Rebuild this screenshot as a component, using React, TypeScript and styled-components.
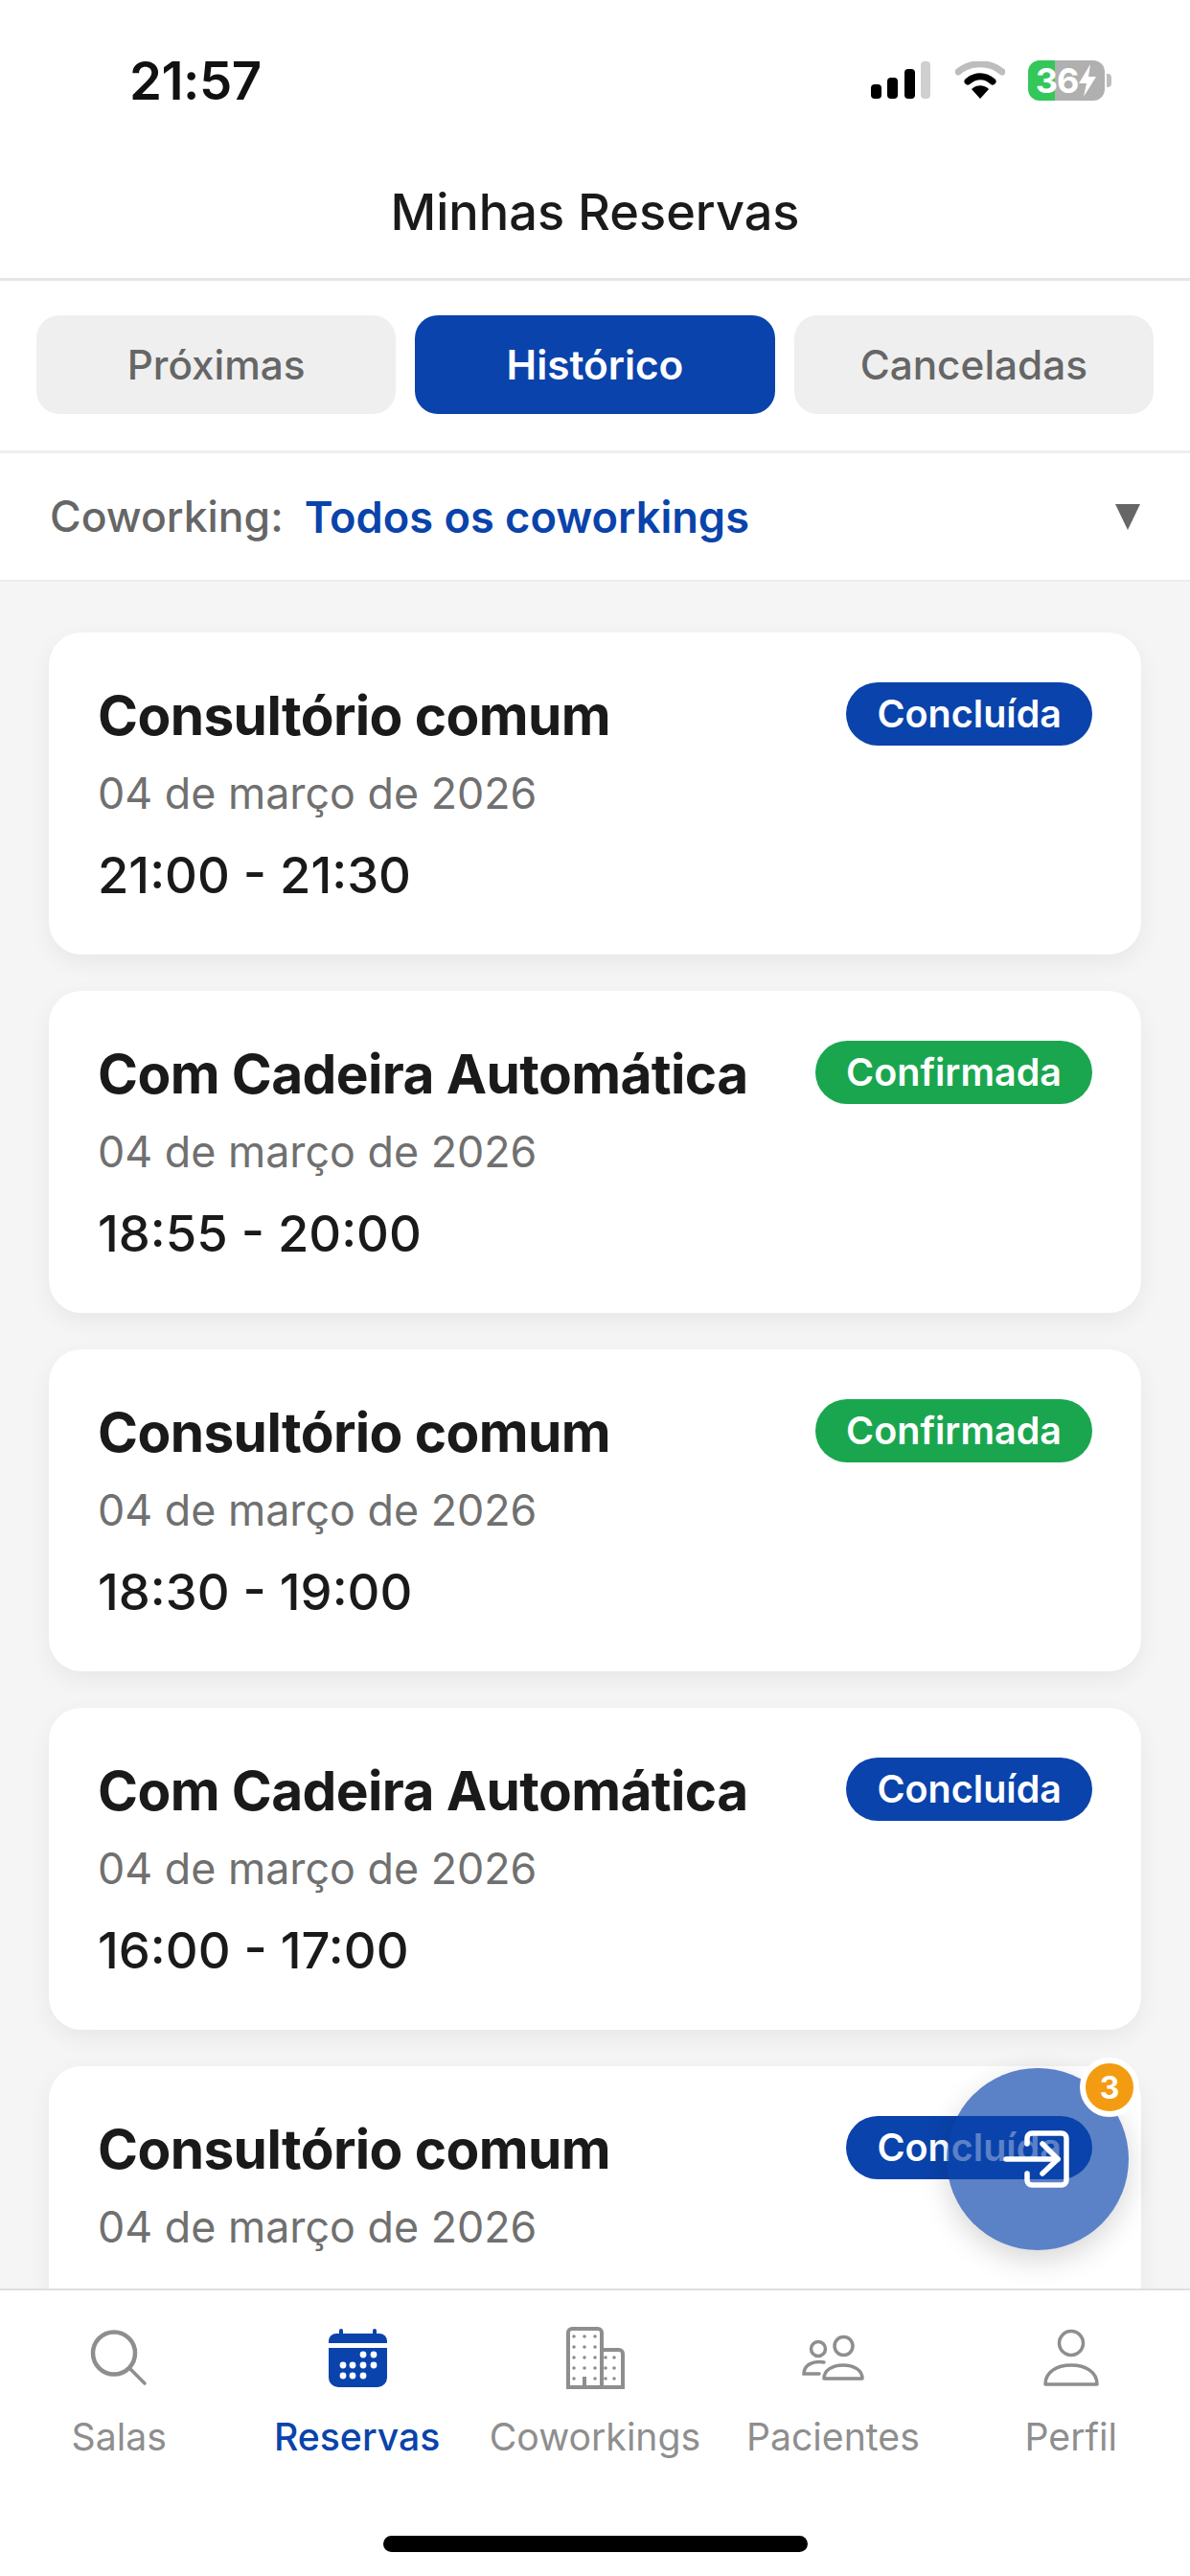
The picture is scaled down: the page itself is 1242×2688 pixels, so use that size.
import styled, { createGlobalStyle } from "styled-components";

interface IBooking {
  room: string;
  date: string;
  time?: string;
  status: "Concluída" | "Confirmada";
}

// the last card runs under the tab bar, its time line is never on screen
const bookings: IBooking[] = [
  { room: "Consultório comum", date: "04 de março de 2026", time: "21:00 - 21:30", status: "Concluída" },
  { room: "Com Cadeira Automática", date: "04 de março de 2026", time: "18:55 - 20:00", status: "Confirmada" },
  { room: "Consultório comum", date: "04 de março de 2026", time: "18:30 - 19:00", status: "Confirmada" },
  { room: "Com Cadeira Automática", date: "04 de março de 2026", time: "16:00 - 17:00", status: "Concluída" },
  { room: "Consultório comum", date: "04 de março de 2026", status: "Concluída" },
];

const BLUE = "#0a43ab";
const GRAY = "#8e8e8e";

const GlobalStyle = createGlobalStyle`
  html, body {
    margin: 0;
    padding: 0;
    background: #fff;
  }
  * {
    box-sizing: border-box;
  }
`;

const Screen = styled.div`
  position: relative;
  width: 1242px;
  height: 2688px;
  display: flex;
  flex-direction: column;
  overflow: hidden;
  background: #fff;
  font-family: Inter, "Liberation Sans", sans-serif;
  color: #1a1a1a;
`;

const StatusBar = styled.div`
  height: 168px;
  flex: none;
  display: flex;
  align-items: center;
  justify-content: space-between;
  padding: 0 89px 0 135px;
`;

const Clock = styled.span`
  font-size: 54.5px;
  font-weight: 600;
  letter-spacing: -0.5px;
  color: #111;
`;

const StatusIcons = styled.div`
  display: flex;
  align-items: center;
  gap: 24px;
`;

const Battery = styled.div`
  position: relative;
  width: 80px;
  height: 42px;
  border-radius: 12px;
  display: flex;
  align-items: center;
  justify-content: center;
  background: linear-gradient(90deg, #34c759 0 35%, #b0b0b0 35% 100%);
  color: #fff;
  font-size: 36px;
  font-weight: 700;
  letter-spacing: -1px;

  &::after {
    content: "";
    position: absolute;
    right: -7px;
    top: 14px;
    width: 5px;
    height: 14px;
    border-radius: 0 4px 4px 0;
    background: #bdbdbd;
  }
`;

const PageTitle = styled.h1`
  height: 125px;
  flex: none;
  margin: 0;
  padding-bottom: 16px;
  display: flex;
  align-items: center;
  justify-content: center;
  border-bottom: 3px solid #e6e6e6;
  font-size: 52.3px;
  font-weight: 500;
  color: #1a1a1a;
`;

const Tabs = styled.div`
  flex: none;
  display: grid;
  grid-template-columns: repeat(3, 1fr);
  gap: 20px;
  padding: 36px 38px 38px;
  border-bottom: 3px solid #eeeeee;
`;

const Tab = styled.div<{ $active?: boolean }>`
  height: 103px;
  display: flex;
  align-items: center;
  justify-content: center;
  border-radius: 24px;
  background: ${(props) => (props.$active ? BLUE : "#efefef")};
  color: ${(props) => (props.$active ? "#fff" : "#666")};
  font-size: 42.3px;
  font-weight: ${(props) => (props.$active ? 600 : 500)};
`;

const Filter = styled.div`
  height: 134px;
  flex: none;
  display: flex;
  align-items: center;
  padding: 0 52px;
  border-bottom: 2px solid #ececec;
`;

const FilterLabel = styled.span`
  color: #666;
  font-size: 44.5px;
  font-weight: 500;
  margin-right: 22px;
`;

const FilterValue = styled.span`
  flex: 1;
  color: ${BLUE};
  font-size: 45.2px;
  font-weight: 600;
`;

const Caret = styled.span`
  width: 0;
  height: 0;
  border-left: 13px solid transparent;
  border-right: 13px solid transparent;
  border-top: 27px solid #666;
`;

const List = styled.main`
  flex: 1;
  min-height: 0;
  overflow: hidden;
  display: flex;
  flex-direction: column;
  gap: 38px;
  padding: 53px 51px 0;
  background: #f5f5f5;
`;

const Card = styled.article`
  flex: none;
  height: 336px;
  padding: 52px 51px;
  border-radius: 34px;
  background: #fff;
  box-shadow: 0 8px 24px rgba(0, 0, 0, 0.06);
`;

const CardHead = styled.div`
  display: flex;
  align-items: flex-start;
  justify-content: space-between;
`;

const RoomName = styled.h2`
  margin: 0;
  font-size: 56.8px;
  line-height: 70px;
  font-weight: 700;
  letter-spacing: -0.6px;
  color: #1a1a1a;
`;

const StatusPill = styled.span<{ $status: IBooking["status"] }>`
  height: 66px;
  padding: 0 32px;
  display: flex;
  align-items: center;
  border-radius: 33px;
  background: ${(props) => (props.$status === "Confirmada" ? "#1aa64f" : BLUE)};
  color: #fff;
  font-size: 39.5px;
  font-weight: 600;
`;

const DateText = styled.div`
  margin-top: 18px;
  font-size: 44.8px;
  line-height: 56px;
  color: #707070;
`;

const TimeText = styled.div`
  margin-top: 25px;
  font-size: 52.5px;
  line-height: 64px;
  font-weight: 500;
  color: #1a1a1a;
`;

const BottomNav = styled.nav`
  flex: none;
  height: 300px;
  display: flex;
  flex-direction: column;
  border-top: 2px solid #dedede;
  background: #fff;
`;

const NavItems = styled.div`
  display: grid;
  grid-template-columns: repeat(5, 1fr);
  padding-top: 35px;
`;

const NavItem = styled.div<{ $active?: boolean }>`
  display: flex;
  flex-direction: column;
  align-items: center;
  gap: 25px;
  color: ${(props) => (props.$active ? BLUE : GRAY)};
  font-size: 39.2px;
  line-height: 46px;
  font-weight: ${(props) => (props.$active ? 500 : 400)};
  white-space: nowrap;
`;

const HomeIndicator = styled.div`
  width: 443px;
  height: 17px;
  margin: 80px auto 0;
  border-radius: 9px;
  background: #000;
`;

const Fab = styled.button`
  position: absolute;
  right: 64px;
  bottom: 340px;
  width: 190px;
  height: 190px;
  padding: 0;
  border: 0;
  border-radius: 50%;
  display: flex;
  align-items: center;
  justify-content: center;
  background: rgba(10, 67, 171, 0.67);
  box-shadow: 0 10px 30px rgba(0, 0, 0, 0.16);
`;

const FabBadge = styled.span`
  position: absolute;
  top: -11px;
  right: -11px;
  width: 62px;
  height: 62px;
  border-radius: 50%;
  border: 6px solid #fff;
  display: flex;
  align-items: center;
  justify-content: center;
  background: #f39c12;
  color: #fff;
  font-family: Inter, "Liberation Sans", sans-serif;
  font-size: 32px;
  font-weight: 700;
`;

const SignalIcon = () => (
  <svg width="64" height="40" viewBox="0 0 64 40">
    <rect x="0" y="24" width="11" height="15" rx="4" fill="#000" />
    <rect x="17" y="17" width="11" height="22" rx="4" fill="#000" />
    <rect x="35" y="8" width="11" height="31" rx="4" fill="#000" />
    <rect x="52" y="0" width="10" height="39" rx="4" fill="#cfcfcf" />
  </svg>
);

const WifiIcon = () => (
  <svg width="52" height="40" viewBox="0 0 52 40" fill="none">
    <path d="M3 11 C16 0 36 0 49 11" stroke="#bdbdbd" strokeWidth="7" strokeLinecap="round" />
    <path d="M13 21 C21 14 31 14 39 21" stroke="#000" strokeWidth="7" strokeLinecap="round" />
    <path d="M17 29 C22 24 30 24 35 29 L26 39 Z" fill="#000" />
  </svg>
);

const BoltIcon = () => (
  <svg width="20" height="36" viewBox="0 0 20 36">
    <path d="M13 1 L1 21 H9 L6 35 L19 14 H11 Z" fill="#fff" />
  </svg>
);

const SearchIcon = () => (
  <svg width="70" height="70" viewBox="0 0 70 70" fill="none" stroke={GRAY} strokeWidth="4.5" strokeLinecap="round">
    <circle cx="30" cy="30.5" r="22" />
    <path d="M47 47 L62 62" strokeWidth="3.5" />
  </svg>
);

const calendarDots = [
  [41, 32], [52, 32],
  [20, 43], [30, 43], [41, 43], [52, 43],
  [20, 54], [30, 54], [41, 54],
];

const CalendarIcon = () => (
  <svg width="70" height="70" viewBox="0 0 70 70">
    <rect x="16" y="5" width="4" height="8" rx="2" fill={BLUE} />
    <rect x="51" y="5" width="4" height="8" rx="2" fill={BLUE} />
    <path d="M5 20 V18 a8 8 0 0 1 8 -8 H58 a8 8 0 0 1 8 8 V20 Z" fill={BLUE} />
    <path d="M5 25 H66 V56 a10 10 0 0 1 -10 10 H15 a10 10 0 0 1 -10 -10 Z" fill={BLUE} />
    {calendarDots.map(([cx, cy]) => (
      <circle key={`${cx}-${cy}`} cx={cx} cy={cy} r="3.4" fill="#fff" />
    ))}
  </svg>
);

const towerDots = [13, 24, 35, 46, 57]
  .flatMap((y) => [13, 24, 35].map((x) => [x, y]))
  .filter(([x, y]) => !(x === 24 && y === 57));
const annexDots = [35, 46, 57].flatMap((y) => [46, 55].map((x) => [x, y]));

const BuildingIcon = () => (
  <svg width="70" height="70" viewBox="0 0 70 70" fill="none" stroke={GRAY} strokeWidth="4">
    <path d="M7 66 V9 a4 4 0 0 1 4 -4 H38 a4 4 0 0 1 4 4 V66" />
    <path d="M42 27 H60 a4 4 0 0 1 4 4 V66" />
    <path d="M5 66 H66" />
    <path d="M24 66 V55" />
    {[...towerDots, ...annexDots].map(([x, y]) => (
      <circle key={`${x}-${y}`} cx={x} cy={y} r="1.8" fill={GRAY} stroke="none" />
    ))}
  </svg>
);

const PeopleIcon = () => (
  <svg width="70" height="70" viewBox="0 0 70 70" fill="none" stroke={GRAY} strokeWidth="3.5">
    <circle cx="46.5" cy="23" r="9.5" />
    <circle cx="20" cy="26" r="7.5" />
    <path d="M26 57 C26 48 35 43 46 43 C57 43 66 48 66 57 Z" strokeLinejoin="round" />
    <path d="M26 40 C14 38 5 43 5 52 H21" strokeLinecap="round" />
  </svg>
);

const PersonIcon = () => (
  <svg width="70" height="70" viewBox="0 0 70 70" fill="none" stroke={GRAY} strokeWidth="3.5">
    <circle cx="35" cy="20" r="12.5" />
    <path d="M8 63 C8 50 20 43 35 43 C50 43 62 50 62 63 Z" strokeLinejoin="round" />
  </svg>
);

const LoginIcon = () => (
  <svg width="80" height="70" viewBox="0 0 80 70" fill="none" stroke="#fff" strokeWidth="5.5" strokeLinecap="round" strokeLinejoin="round">
    <path d="M29 19 V13 a5 5 0 0 1 5 -5 H65 a5 5 0 0 1 5 5 V57 a5 5 0 0 1 -5 5 H34 a5 5 0 0 1 -5 -5 V50" />
    <path d="M7 35 H61" />
    <path d="M45 19 L61 35 L45 50" />
  </svg>
);

const navItems = [
  { label: "Salas", icon: <SearchIcon /> },
  { label: "Reservas", icon: <CalendarIcon />, active: true },
  { label: "Coworkings", icon: <BuildingIcon /> },
  { label: "Pacientes", icon: <PeopleIcon /> },
  { label: "Perfil", icon: <PersonIcon /> },
];

function App() {
  return (
    <Screen>
      <GlobalStyle />
      <StatusBar>
        <Clock>21:57</Clock>
        <StatusIcons>
          <SignalIcon />
          <WifiIcon />
          <Battery>
            36
            <BoltIcon />
          </Battery>
        </StatusIcons>
      </StatusBar>
      <PageTitle>Minhas Reservas</PageTitle>
      <Tabs>
        <Tab>Próximas</Tab>
        <Tab $active>Histórico</Tab>
        <Tab>Canceladas</Tab>
      </Tabs>
      <Filter>
        <FilterLabel>Coworking:</FilterLabel>
        <FilterValue>Todos os coworkings</FilterValue>
        <Caret />
      </Filter>
      <List>
        {bookings.map((booking, index) => (
          <Card key={index}>
            <CardHead>
              <RoomName>{booking.room}</RoomName>
              <StatusPill $status={booking.status}>{booking.status}</StatusPill>
            </CardHead>
            <DateText>{booking.date}</DateText>
            {booking.time && <TimeText>{booking.time}</TimeText>}
          </Card>
        ))}
      </List>
      <BottomNav>
        <NavItems>
          {navItems.map((item) => (
            <NavItem key={item.label} $active={item.active}>
              {item.icon}
              {item.label}
            </NavItem>
          ))}
        </NavItems>
        <HomeIndicator />
      </BottomNav>
      <Fab>
        <LoginIcon />
        <FabBadge>3</FabBadge>
      </Fab>
    </Screen>
  );
}

export default App;
